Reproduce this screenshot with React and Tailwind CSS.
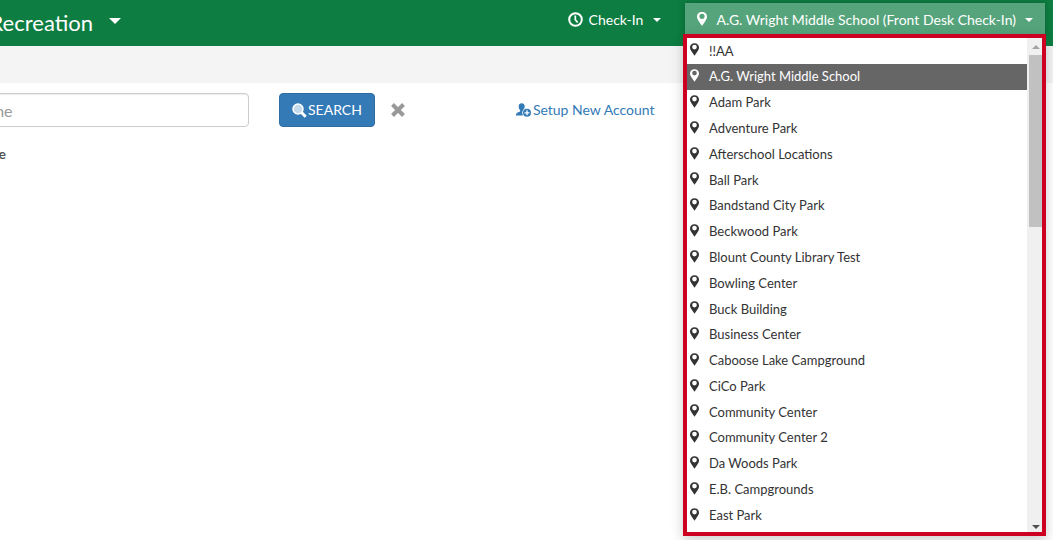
import React, { useState } from "react";

const locations = [
  "!!AA",
  "A.G. Wright Middle School",
  "Adam Park",
  "Adventure Park",
  "Afterschool Locations",
  "Ball Park",
  "Bandstand City Park",
  "Beckwood Park",
  "Blount County Library Test",
  "Bowling Center",
  "Buck Building",
  "Business Center",
  "Caboose Lake Campground",
  "CiCo Park",
  "Community Center",
  "Community Center 2",
  "Da Woods Park",
  "E.B. Campgrounds",
  "East Park",
];

const PinIcon = ({ className }) => (
  <svg viewBox="0 0 10 14" className={className} fill="currentColor" aria-hidden="true">
    <path
      fillRule="evenodd"
      d="M5 0C2 0 0 2 0 4.700c0 1.500.7 2.700 1.600 4.200C2.600 10.500 4 12 5 14c1-2 2.400-3.500 3.400-5.100C9.300 7.400 10 6.200 10 4.700 10 2 8 0 5 0zm0 1.700a2.600 2.600 0 1 1 0 5.200 2.600 2.600 0 0 1 0-5.200z"
    />
  </svg>
);

const ClockIcon = () => (
  <svg viewBox="0 0 15 15" className="mb-[2px] h-[15px] w-[15px]" fill="none" stroke="currentColor" aria-hidden="true">
    <circle cx="7.500" cy="7.500" r="6.300" strokeWidth="2" />
    <path d="M7.300 3.500v4.200l2.400 2.800" strokeWidth="1.700" />
  </svg>
);

const SearchIcon = () => (
  <svg viewBox="0 0 15 15" className="h-[15px] w-[15px]" aria-hidden="true">
    <path d="M9.500 9.500l4.200 4.200" stroke="#fff" strokeWidth="3" />
    <circle cx="6" cy="6" r="5" fill="#c4dbee" stroke="#fff" strokeWidth="1.500" />
  </svg>
);

const AddUserIcon = () => (
  <svg viewBox="0 0 15 14" className="h-[14px] w-[15px]" fill="currentColor" aria-hidden="true">
    <path d="M5.700.3c2 0 3.100 1.300 3 3.200-.1 1.500-.6 2.600-1.300 3.300-.2.900 0 1.300.7 1.700L6.800 12.500H0c0-1.900.4-2.500 1.700-3 1.700-.6 2.500-.9 2.500-1.500 0-.5-.1-.9-.4-1.200C3.100 6 2.700 5 2.700 3.500c0-2 1.100-3.200 3-3.200z" />
    <circle cx="11" cy="9.800" r="4.800" fill="#fff" />
    <circle cx="11" cy="9.800" r="4" />
    <path d="M11 7.300v5M8.500 9.800h5" stroke="#fff" strokeWidth="1.300" />
  </svg>
);

const ClearIcon = () => (
  <svg viewBox="0 0 14 14" className="h-[14px] w-[14px]" fill="none" stroke="currentColor" aria-hidden="true">
    <path d="M1.500 1.500l11 11M12.500 1.500l-11 11" strokeWidth="4" />
  </svg>
);

const Caret = ({ className }) => (
  <svg viewBox="0 0 8 4" className={className} fill="currentColor" aria-hidden="true">
    <path d="M0 0h8L4 4z" />
  </svg>
);

const App = () => {
  const [open, setOpen] = useState(true);
  const [selected, setSelected] = useState("A.G. Wright Middle School");

  return (
    <div className="relative h-screen overflow-hidden bg-white font-['Lato',sans-serif] text-sm text-[#333]">
      {/* Top bar */}
      <header className="flex h-[46px] items-start bg-[#0d7d41] text-white">
        <button type="button" className="flex h-[46px] items-center gap-4">
          <span className="flex w-[93px] justify-end overflow-hidden text-[22px] whitespace-nowrap">
            Parks &amp; Recreation
          </span>
          <Caret className="mb-1 h-[6px] w-[12px]" />
        </button>

        <nav className="ml-auto flex items-start gap-6 pt-[3px] pr-2">
          <button type="button" className="flex h-[34px] items-center">
            <ClockIcon />
            <span className="ml-[6px]">Check-In</span>
            <Caret className="ml-[10px] h-[4px] w-[8px]" />
          </button>
          <button
            type="button"
            aria-expanded={open}
            onClick={() => setOpen(!open)}
            className="flex h-[34px] items-center bg-[#56a47b] px-3 shadow-[0_0_8px_rgba(0,0,0,0.2)]"
          >
            <PinIcon className="mb-[2px] h-[14px] w-[10px]" />
            <span className="mx-[9px] whitespace-nowrap">{selected} (Front Desk Check-In)</span>
            <Caret className="h-[4px] w-[8px]" />
          </button>
        </nav>
      </header>

      <div className="h-[37px] bg-[#f4f4f4]" />

      {/* Account search */}
      <form className="flex items-center pt-[10px]" onSubmit={(e) => e.preventDefault()}>
        <div className="flex w-[249px] justify-end overflow-hidden">
          <input
            type="text"
            aria-label="Name"
            placeholder="Name"
            className="h-[34px] w-[291px] shrink-0 rounded border border-[#ccc] px-3 text-base shadow-[inset_0_1px_1px_rgba(0,0,0,0.075)] placeholder:text-[#999]"
          />
        </div>
        <button
          type="submit"
          className="ml-[30px] flex h-[34px] items-center gap-px rounded border border-[#2e6da4] bg-[#337ab7] px-3 text-white"
        >
          <SearchIcon />
          SEARCH
        </button>
        <button type="reset" aria-label="Clear" className="ml-4 text-[#999]">
          <ClearIcon />
        </button>
        <a href="#new-account" className="ml-[111px] flex items-center gap-[2px] text-[#337ab7]">
          <AddUserIcon />
          Setup New Account
        </a>
      </form>

      <div className="mt-[17px] flex w-[6px] justify-end overflow-hidden font-bold text-[#555]">
        Name
      </div>

      {/* Location menu */}
      {open && (
        <div className="absolute top-[34px] right-[7px] flex w-[363px] border-4 border-[#ce0021] bg-white shadow-[0_4px_12px_rgba(0,0,0,0.2)]">
          <ul className="grid h-[494px] flex-1 auto-rows-fr pb-1">
            {locations.map((name) => (
              <li key={name} className="flex">
                <button
                  type="button"
                  onClick={() => setSelected(name)}
                  className={`flex flex-1 items-center gap-[10px] pl-[3px] text-[13px] ${
                    name === selected ? "bg-[#666] text-white" : ""
                  }`}
                >
                  <PinIcon className="mb-[2px] h-[13px] w-[9px]" />
                  {name}
                </button>
              </li>
            ))}
          </ul>

          {/* Scroll track */}
          <div className="flex w-[15px] flex-col items-center bg-[#f0f0f0] pl-[2px]" aria-hidden="true">
            <Caret className="mt-[7px] mb-[6px] h-[4px] w-[8px] rotate-180 text-[#a3a3a3]" />
            <div className="h-[172px] w-full bg-[#c1c1c1]" />
            <Caret className="mt-auto mb-[3px] h-[4px] w-[8px] text-[#505050]" />
          </div>
        </div>
      )}
    </div>
  );
};

export default App;
